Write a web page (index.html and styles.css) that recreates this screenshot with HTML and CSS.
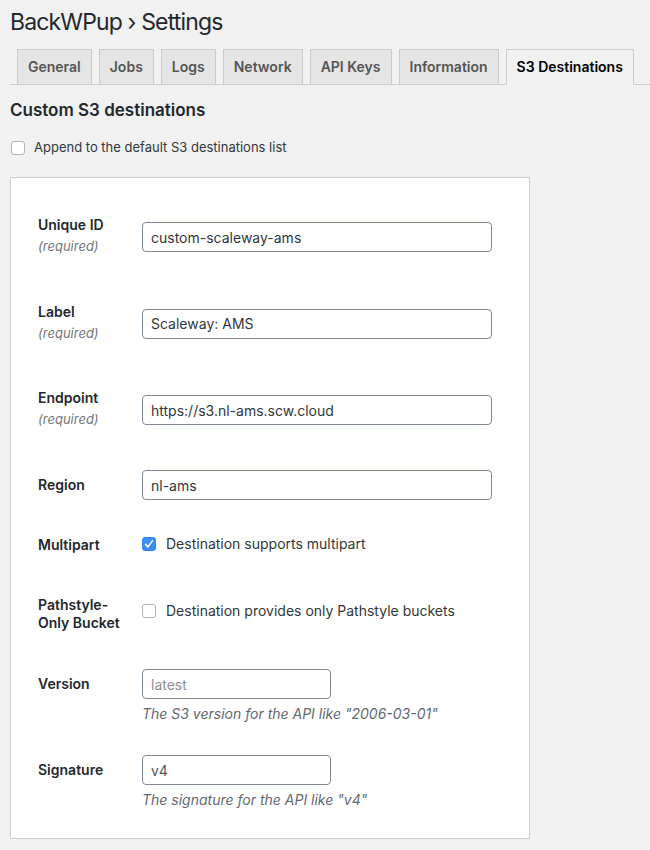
FILE: index.html
```html
<!DOCTYPE html>
<html lang="en">
<head>
<meta charset="utf-8">
<title>BackWPup › Settings</title>
<link rel="stylesheet" href="styles.css">
</head>
<body>
<div class="wrap">
  <h1 class="page-title">BackWPup › Settings</h1>
  <nav class="tabs">
    <a class="tab" href="#">General</a>
    <a class="tab" href="#">Jobs</a>
    <a class="tab" href="#">Logs</a>
    <a class="tab" href="#">Network</a>
    <a class="tab" href="#">API Keys</a>
    <a class="tab" href="#">Information</a>
    <a class="tab tab--active" href="#">S3 Destinations</a>
  </nav>
  <h2 class="section-title">Custom S3 destinations</h2>
  <label class="append">
    <span class="checkbox"></span>
    <span>Append to the default S3 destinations list</span>
  </label>
  <div class="card">
    <div class="row row--req">
      <div class="row-label"><div>Unique ID</div><div class="required">(required)</div></div>
      <div class="row-field"><input class="text-input" type="text" value="custom-scaleway-ams"></div>
    </div>
    <div class="row row--req">
      <div class="row-label"><div>Label</div><div class="required">(required)</div></div>
      <div class="row-field"><input class="text-input" type="text" value="Scaleway: AMS"></div>
    </div>
    <div class="row row--req">
      <div class="row-label"><div>Endpoint</div><div class="required">(required)</div></div>
      <div class="row-field"><input class="text-input" type="text" value="https://s3.nl-ams.scw.cloud"></div>
    </div>
    <div class="row row--plain">
      <div class="row-label">Region</div>
      <div class="row-field"><input class="text-input" type="text" value="nl-ams"></div>
    </div>
    <div class="row row--check">
      <div class="row-label">Multipart</div>
      <div class="row-field">
        <label class="check-field">
          <span class="checkbox checkbox--on"><svg viewBox="0 0 14 14" width="14" height="14"><path d="M3.6 7.4 L6 9.9 L10.4 3.9" fill="none" stroke="#fff" stroke-width="1.6" stroke-linecap="round" stroke-linejoin="round"/></svg></span>
          <span>Destination supports multipart</span>
        </label>
      </div>
    </div>
    <div class="row row--check2">
      <div class="row-label">Pathstyle-Only Bucket</div>
      <div class="row-field">
        <label class="check-field">
          <span class="checkbox"></span>
          <span>Destination provides only Pathstyle buckets</span>
        </label>
      </div>
    </div>
    <div class="row row--desc">
      <div class="row-label">Version</div>
      <div class="row-field">
        <input class="text-input text-input--small" type="text" placeholder="latest">
        <p class="desc">The S3 version for the API like "2006-03-01"</p>
      </div>
    </div>
    <div class="row row--desc">
      <div class="row-label">Signature</div>
      <div class="row-field">
        <input class="text-input text-input--small text-input--muted" type="text" value="v4">
        <p class="desc">The signature for the API like "v4"</p>
      </div>
    </div>
  </div>
</div>
</body>
</html>
```
FILE: styles.css
```css
html, body {
  margin: 0;
  background: #f1f1f1;
}
body {
  font-family: Inter, "Noto Sans", sans-serif;
  color: #23282d;
}
.wrap {
  padding-left: 10px;
}
.page-title {
  margin: 0;
  padding: 7px 0 4px;
  font-size: 23px;
  line-height: 30px;
  font-weight: 400;
  letter-spacing: -0.85px;
  color: #23282d;
}
.tabs {
  display: flex;
  align-items: flex-start;
  padding-top: 8px;
  border-bottom: 1px solid #ccc;
}
.tab {
  margin-left: 7px;
  padding: 5px 10px;
  border: 1px solid #ccc;
  border-bottom: none;
  background: #e5e5e5;
  color: #555;
  font-size: 14px;
  line-height: 24px;
  font-weight: 600;
  text-decoration: none;
  white-space: nowrap;
}
.tab--active {
  background: #f1f1f1;
  color: #000;
  border-bottom: 1px solid #f1f1f1;
  margin-bottom: -1px;
}
.section-title {
  margin: 15px 0 0;
  font-size: 17px;
  line-height: 21.5px;
  font-weight: 600;
  color: #23282d;
}
.append {
  display: flex;
  align-items: center;
  gap: 9px;
  margin-top: 15.6px;
  padding-left: 1px;
  font-size: 13px;
  line-height: 21px;
  color: #32373c;
}
.checkbox {
  display: inline-block;
  flex: none;
  width: 14px;
  height: 14px;
  box-sizing: border-box;
  border: 1px solid #b4b4b4;
  border-radius: 3px;
  background: #fff;
}
.checkbox svg {
  display: block;
  margin: -1px;
}
.checkbox--on {
  background: #3b8ff6;
  border-color: #3486ee;
}
.card {
  margin-top: 19px;
  width: 520px;
  box-sizing: border-box;
  background: #fff;
  border: 1px solid #ccd0d4;
  padding: 18px 0 11.5px 27px;
}
.row {
  display: grid;
  grid-template-columns: 104px 350px;
  box-sizing: border-box;
}
.row-label {
  padding-top: 20px;
  padding-right: 10px;
  font-size: 14px;
  line-height: 18.2px;
  font-weight: 600;
  color: #23282d;
}
.required {
  margin-top: 2.9px;
  font-size: 13px;
  font-weight: 400;
  font-style: italic;
  color: #72777c;
}
.row--req { height: 86.5px; }
.row--req .row-field { padding-top: 26px; }
.row--plain { height: 60px; }
.row--plain .row-field { padding-top: 14.5px; }
.row--check { height: 60px; }
.row--check .row-field { padding-top: 19px; }
.row--check2 { height: 79px; }
.row--check2 .row-field { padding-top: 26.7px; }
.row--desc { height: 86px; }
.row--desc .row-field { padding-top: 14.5px; }
.text-input {
  display: block;
  width: 350px;
  height: 30px;
  box-sizing: border-box;
  margin: 0;
  padding: 0 8px;
  border: 1px solid #7e8993;
  border-radius: 4px;
  background: #fff;
  font-family: Inter, "Noto Sans", sans-serif;
  font-size: 14px;
  color: #32373c;
  outline: none;
}
.text-input--small {
  width: 189px;
}
.text-input--muted {
  color: #50575e;
}
.text-input::placeholder {
  color: #8c8f94;
  opacity: 1;
}
.check-field {
  display: flex;
  align-items: center;
  gap: 10px;
  font-size: 14px;
  line-height: 18.2px;
  color: #32373c;
}
.desc {
  margin: 4px 0 0;
  font-size: 14px;
  line-height: 21px;
  font-style: italic;
  color: #646970;
}
```
